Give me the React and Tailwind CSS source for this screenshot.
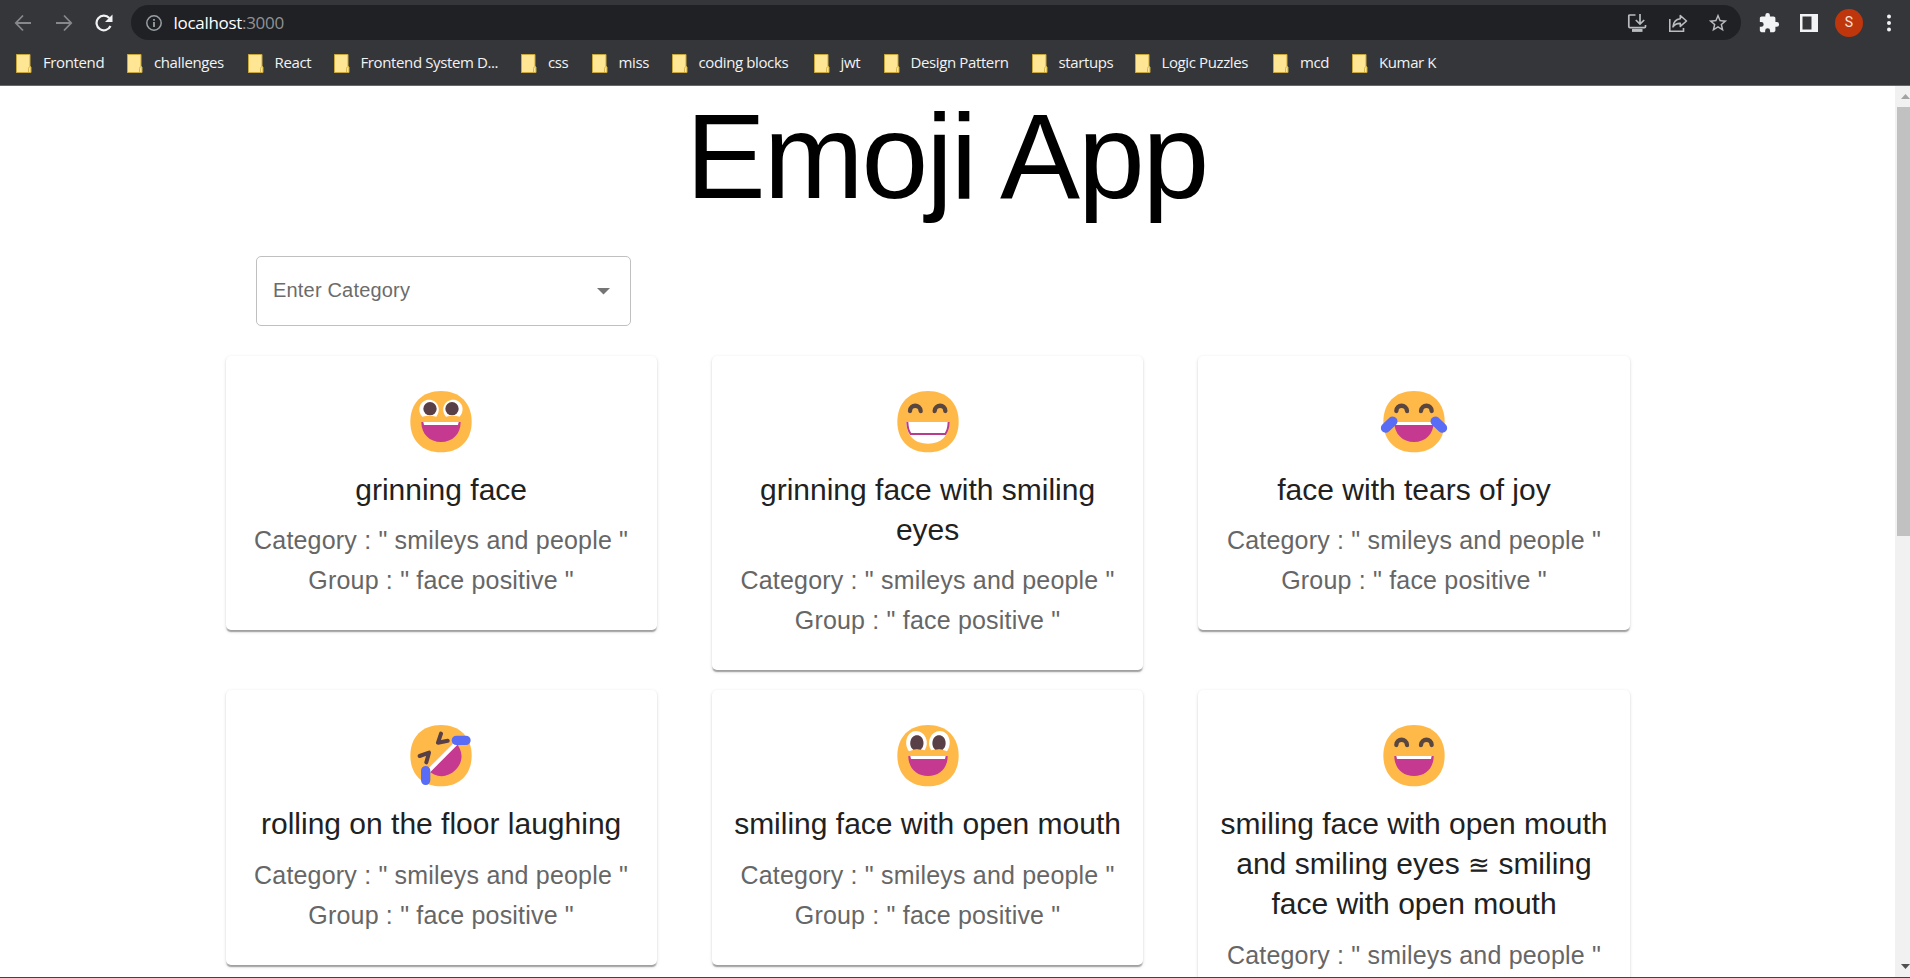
import React from "react";

const bookmarks = [
  ["Frontend", "w-[111px]"],
  ["challenges", "w-[120.5px]"],
  ["React", "w-[86px]"],
  ["Frontend System D...", "w-[187.5px]"],
  ["css", "w-[70.5px]"],
  ["miss", "w-[80px]"],
  ["coding blocks", "w-[142px]"],
  ["jwt", "w-[70px]"],
  ["Design Pattern", "w-[148px]"],
  ["startups", "w-[103px]"],
  ["Logic Puzzles", "w-[138.5px]"],
  ["mcd", "w-[79px]"],
  ["Kumar K", "w-[100px]"],
];

function Folder() {
  return (
    <svg width="16" height="19" viewBox="0 0 16 19" className="shrink-0">
      <path d="M.5.5H12V12L13 13V18.500H.5Z" fill="#ffe694" />
      <path d="M.5.5H14V12L15 13V18.500H.5Z" fill="#ffe694" stroke="#c9a73a" />
      <path d="M12.500 18V14.500Q12.500 12.500 14.500 12.500" fill="none" stroke="#d9b94c" />
    </svg>
  );
}

function Arrow({ flip }) {
  return (
    <svg width="18" height="18" viewBox="0 0 18 18" fill="none" stroke="#87888b" strokeWidth="1.8" className={flip ? "rotate-180" : ""}>
      <path d="M17 9H2M9 1.500L1.800 9L9 16.500" />
    </svg>
  );
}

function Browser() {
  return (
    <header className="flex h-[86px] flex-col border-b border-[#6a6769] bg-[#35363a] font-['Open_Sans','Noto_Sans',sans-serif]">
      <div className="flex h-[45px] items-center pl-[14px]">
        <Arrow />
        <div className="ml-[23px]"><Arrow flip /></div>
        <svg width="18" height="18" viewBox="0 0 18 18" className="ml-[22px]">
          <path d="M15.500 12A7.300 7.300 0 1 1 14.300 4.100" fill="none" stroke="#f1f3f4" strokeWidth="2.200" />
          <path d="M17.500 .5V8H10Z" fill="#f1f3f4" />
        </svg>
        <div className="ml-[18px] flex h-[35px] w-[1610px] items-center rounded-full bg-[#202124] pl-[15px] pr-[13px]">
          <svg width="16" height="16" viewBox="0 0 16 16" fill="none" stroke="#9aa0a6">
            <circle cx="8" cy="8" r="7.200" strokeWidth="1.500" />
            <path d="M8 7V12M8 4V5.700" strokeWidth="1.800" />
          </svg>
          <span className="ml-[11.5px] text-[17px] leading-none tracking-[-0.3px] text-white">
            localhost<span className="text-[#8f9296]">:3000</span>
          </span>
          <svg width="20" height="20" viewBox="0 0 20 20" fill="none" stroke="#b9bcc0" strokeWidth="1.700" className="ml-auto">
            <path d="M8.500 2H3Q1.800 2 1.800 3V13.500Q1.800 14.700 3 14.700H17.500Q18.500 14.700 18.500 13.500V12" />
            <path d="M13 1V10.500M8.800 7L13 11L17.200 7" />
            <path d="M5 17.400H15.500" strokeWidth="3" />
          </svg>
          <svg width="20" height="20" viewBox="0 0 20 20" fill="none" stroke="#b9bcc0" strokeWidth="1.600" className="ml-[21px]">
            <path d="M1.800 6V18.200H15.500V15" />
            <path d="M12.300 2.500L18.500 8L12.300 13.400V10.400Q7.500 10.200 5 13.800Q5.700 6.500 12.300 5.800Z" strokeLinejoin="round" />
          </svg>
          <svg width="22" height="22" viewBox="0 0 24 24" fill="#b9bcc0" className="-mr-[1px] ml-[19px]">
            <path d="M22 9.240l-7.190-.62L12 2 9.190 8.630 2 9.240l5.460 4.730L5.820 21 12 17.270 18.180 21l-1.630-7.030L22 9.240zM12 15.400l-3.760 2.270 1-4.280-3.320-2.880 4.380-.38L12 6.100l1.710 4.040 4.380.38-3.320 2.880 1 4.280L12 15.400z" />
          </svg>
        </div>
        <svg width="22" height="22" viewBox="0 0 24 24" fill="#f1f3f4" className="ml-[17px]">
          <path d="M20.500 11H19V7c0-1.100-.9-2-2-2h-4V3.500a2.500 2.500 0 0 0-5 0V5H4c-1.100 0-1.990.9-1.990 2v3.800H3.500a2.700 2.700 0 0 1 0 5.400H2V20c0 1.100.9 2 2 2h3.800v-1.500a2.700 2.700 0 0 1 5.400 0V22H17c1.100 0 2-.9 2-2v-4h1.500a2.500 2.500 0 0 0 0-5z" />
        </svg>
        <svg width="18" height="18" viewBox="0 0 18 18" className="ml-[20px]">
          <path fillRule="evenodd" d="M0 0H18V18H0ZM2.500 2.500V15.500H11.500V2.500Z" fill="#f1f3f4" />
        </svg>
        <div className="ml-[17px] flex size-[28px] items-center justify-center rounded-full bg-[#bf360c] font-[Roboto,sans-serif] text-[14px] text-[#f6e3dc]">S</div>
        <svg width="6" height="18" viewBox="0 0 6 18" fill="#f1f3f4" className="ml-[22.5px]">
          <circle cx="3" cy="2.500" r="2" />
          <circle cx="3" cy="9" r="2" />
          <circle cx="3" cy="15.500" r="2" />
        </svg>
      </div>
      <nav className="flex h-[36px] items-center pl-[16px]">
        {bookmarks.map(([name, width]) => (
          <div key={name} className={`flex shrink-0 items-center gap-[11px] ${width}`}>
            <Folder />
            <span className="whitespace-nowrap pb-[2px] text-[15px] leading-5 tracking-[-0.38px] text-[#f1f3f4]">{name}</span>
          </div>
        ))}
      </nav>
    </header>
  );
}

function Face({ children }) {
  return (
    <svg width="100" height="80" viewBox="-150 -125 300 240" className="block">
      <path d="M0-92C56-92 92-56 92 0C92 56 56 92 0 92C-56 92-92 56-92 0C-92-56-56-92 0-92Z" fill="#ffb948" />
      {children}
    </svg>
  );
}

function OpenMouth() {
  return (
    <g>
      <path d="M-59 1H59C59 38 34 61 0 61C-34 61-59 38-59 1Z" fill="#c53990" />
      <path d="M-53 1H53L51 10H-51Z" fill="#fff" />
    </g>
  );
}

function HappyEyes() {
  return (
    <path d="M-53-32C-53-53-22-53-21-32M21-32C22-53 53-53 53-32" fill="none" stroke="#594640" strokeWidth="13" strokeLinecap="round" />
  );
}

function Grinning() {
  return (
    <Face>
      <path d="M-14-15Q-35-21-56-15C-75-37-61-66-36-66C-11-66 3-38-14-15ZM15-15Q36-21 56-15C75-37 61-66 37-66C11-66-3-38 15-15Z" fill="#fff" />
      <circle cx="-33" cy="-39" r="20" fill="#594046" />
      <circle cx="33" cy="-39" r="20" fill="#594046" />
      <OpenMouth />
    </Face>
  );
}

function GrinningSmilingEyes() {
  return (
    <Face>
      <g transform="translate(-1 0)"><HappyEyes /></g>
      <path d="M-65 1H64C64 42 40 66 0 66C-40 66-65 42-65 1Z" fill="#fff" />
      <path d="M-62 1Q-61 25-52 37H52Q61 25 62 1" fill="none" stroke="#b83b8e" strokeWidth="6" />
    </Face>
  );
}

function Tears() {
  return (
    <Face>
      <HappyEyes />
      <path d="M-59 1H59C59 38 34 61 0 61C-34 61-59 38-59 1Z" fill="#c53990" />
      <path d="M-58 1H58L56 10H-56Z" fill="#fff" />
      <path d="M-85 19L-64-1M85 19L64-1" stroke="#596cf6" strokeWidth="29" strokeLinecap="round" />
    </Face>
  );
}

function Rolling() {
  return (
    <Face>
      <g transform="rotate(-45)">
        <path d="M-59 1H59C59 38 34 61 0 61C-34 61-59 38-59 1Z" fill="#c53990" />
        <path d="M-59 0H59V12H-59Z" fill="#fff" />
      </g>
      <path d="M0-66L-9-39L20-45M-64 1L-36-9L-44 20" fill="none" stroke="#594046" strokeWidth="12" strokeLinecap="round" strokeLinejoin="round" />
      <path d="M46-46H75M-46 45V74" stroke="#596cf6" strokeWidth="28" strokeLinecap="round" />
    </Face>
  );
}

function Smiling() {
  return (
    <Face>
      <path d="M-10-16Q-34-23-57-13C-75-39-62-74-36-74C-8-74 6-39-10-16ZM10-16Q35-23 57-13C75-39 62-74 36-74C8-74-6-39 10-16Z" fill="#fff" />
      <path d="M-44-18C-60-29-54-61-33-61C-12-61-7-29-22-18Q-33-21-44-18ZM22-18C7-29 12-61 33-61C54-61 60-29 44-18Q33-21 22-18Z" fill="#594046" />
      <OpenMouth />
    </Face>
  );
}

function SmilingEyes() {
  return (
    <Face>
      <HappyEyes />
      <OpenMouth />
    </Face>
  );
}

const emojis = [
  { id: 1, name: "grinning face", Icon: Grinning, group: "face positive" },
  { id: 2, name: "grinning face with smiling eyes", Icon: GrinningSmilingEyes, group: "face positive" },
  { id: 3, name: "face with tears of joy", Icon: Tears, group: "face positive" },
  { id: 4, name: "rolling on the floor laughing", Icon: Rolling, group: "face positive" },
  { id: 5, name: "smiling face with open mouth", Icon: Smiling, group: "face positive" },
  {
    id: 6,
    name: (
      <>
        smiling face with open mouth and smiling eyes <span className="text-[26px] font-light leading-none">≊</span> smiling face with open mouth
      </>
    ),
    Icon: SmilingEyes,
  },
];

function Card({ name, Icon, group }) {
  return (
    <article className="flex flex-col items-center rounded-[5px] bg-white px-5 pb-[30px] pt-[23.7px] text-center shadow-[0_2.5px_1.25px_-1.25px_rgba(0,0,0,0.2),0_1.25px_1.25px_0_rgba(0,0,0,0.14),0_1.25px_3.75px_0_rgba(0,0,0,0.12)]">
      <Icon />
      <h2 className="mb-[10.5px] mt-[10px] text-[30px] leading-[40px] text-[#212121]">{name}</h2>
      <p className="whitespace-nowrap text-[25px] leading-[40px] tracking-[0.0075em] text-[#666]">Category : " smileys and people "</p>
      {group && <p className="whitespace-nowrap text-[25px] leading-[40px] tracking-[0.0075em] text-[#666]">Group : " {group} "</p>}
    </article>
  );
}

export default function App() {
  return (
    <div className="flex h-[978px] w-[1910px] flex-col overflow-hidden border-b border-[#3f424c] bg-white">
      <Browser />
      <div className="flex min-h-0 flex-1">
        <main className="w-[1895px] overflow-hidden font-['Liberation_Sans',Arial,sans-serif]">
          <h1 className="pr-[2px] text-center text-[120px] leading-[140px] tracking-[-0.0175em] text-black">Emoji App</h1>
          <div className="ml-[256px] mt-[30px] flex h-[70px] w-[375px] items-center justify-between rounded-[5px] border border-[#c0c0c0] pl-[16px] pr-[20px]">
            <span className="pb-[2px] text-[20px] tracking-[0.00938em] text-[#6b6b6b]">Enter Category</span>
            <svg width="13" height="7" viewBox="0 0 13 7" fill="#757575"><path d="M0 0H13L6.500 6.500Z" /></svg>
          </div>
          <section className="ml-[225.5px] mt-[30.2px] grid grid-cols-[431.25px_431.25px_431.25px] items-start gap-x-[55.2px] gap-y-[20px]">
            {emojis.map((emoji) => <Card key={emoji.id} {...emoji} />)}
          </section>
        </main>
        <aside className="flex w-[15px] flex-col items-end bg-[#f1f1f1]">
          <div className="flex h-[21px] w-[13px] items-center justify-end">
            <svg width="9" height="5" viewBox="0 0 9 5" fill="#a3a3a3"><path d="M0 5L4.500 0L9 5Z" /></svg>
          </div>
          <div className="h-[429px] w-[13px] bg-[#c1c1c1]" />
          <div className="mt-auto flex h-[21px] w-[13px] items-center justify-end">
            <svg width="9" height="5" viewBox="0 0 9 5" fill="#505050"><path d="M0 0H9L4.500 5Z" /></svg>
          </div>
        </aside>
      </div>
    </div>
  );
}
